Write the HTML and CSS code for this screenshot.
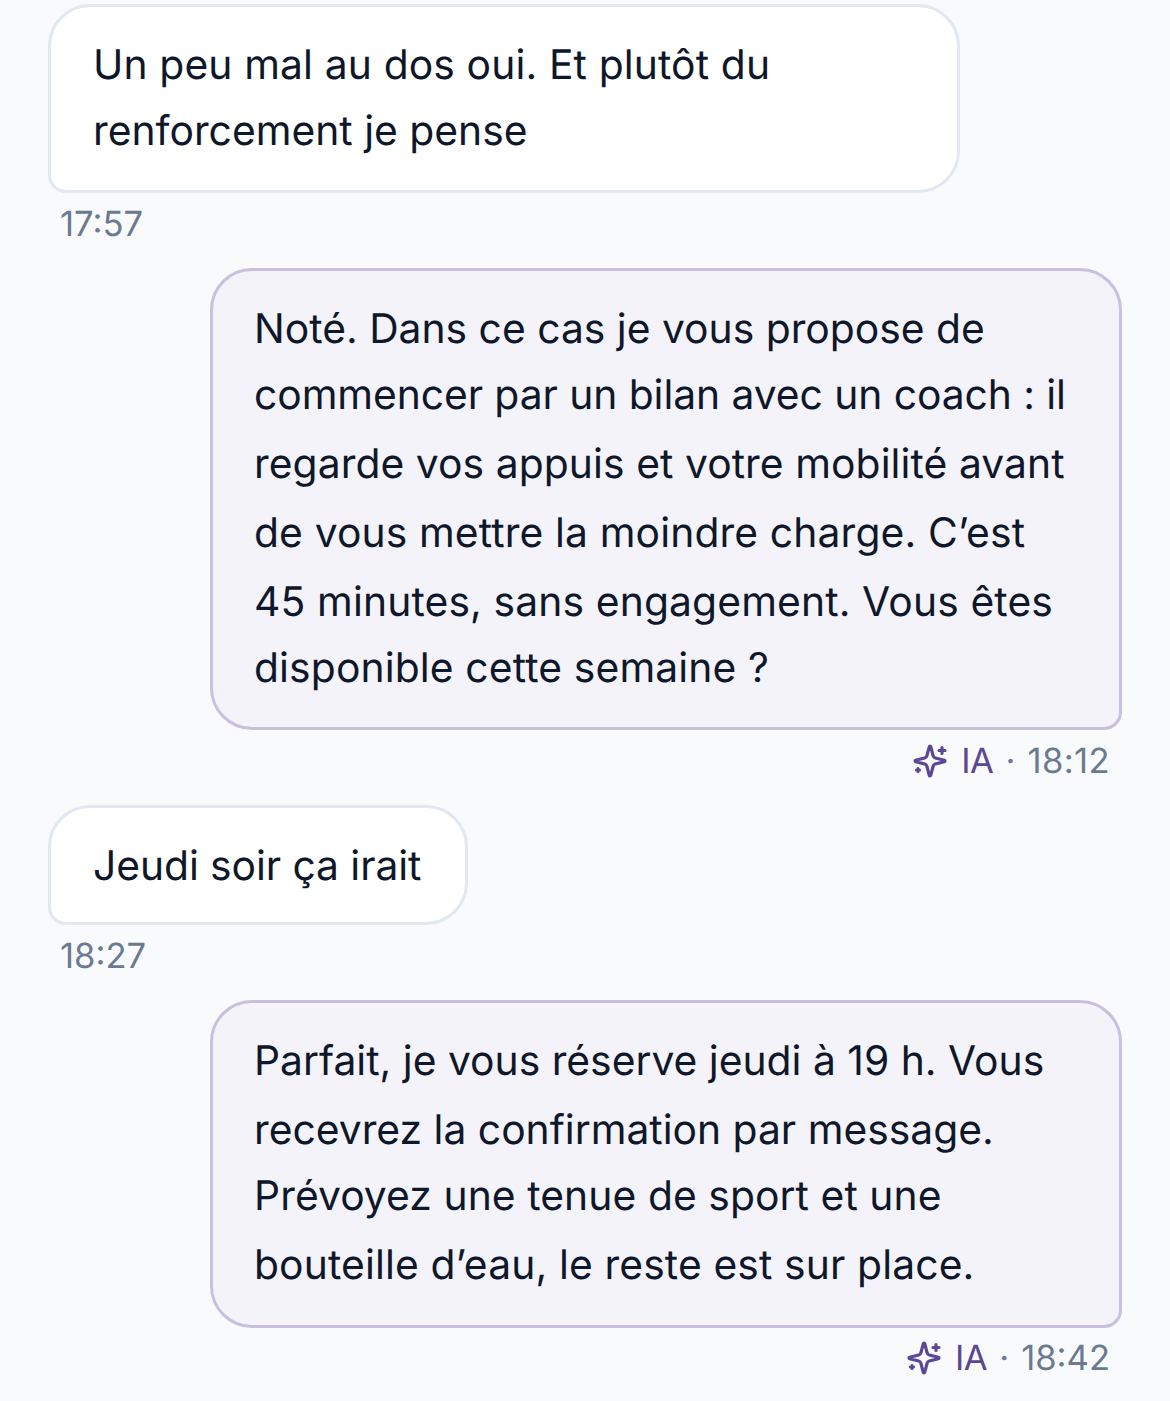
FILE: index.html
```html
<!DOCTYPE html>
<html lang="fr">
<head>
<meta charset="utf-8">
<title>Conversation</title>
<link rel="stylesheet" href="styles.css">
</head>
<body>
<main class="thread">
  <section class="msg msg-in msg-a">
    <div class="bubble">
      <span class="line line-wide">Un peu mal au dos oui. Et plutôt du</span>
      <span class="line">renforcement je pense</span>
    </div>
    <div class="meta"><span class="time">17:57</span></div>
  </section>
  <section class="msg msg-out msg-b">
    <div class="bubble">
      <span class="line">Noté. Dans ce cas je vous propose de</span>
      <span class="line line-tight">commencer par un bilan avec un coach : il</span>
      <span class="line line-gap line-mid">regarde vos appuis et votre mobilité avant</span>
      <span class="line line-gap line-wide">de vous mettre la moindre charge. C’est</span>
      <span class="line line-gap line-wide">45 minutes, sans engagement. Vous êtes</span>
      <span class="line line-wide">disponible cette semaine ?</span>
    </div>
    <div class="meta">
      <svg class="spark" viewBox="0 0 24 24" aria-hidden="true"><path d="M9.937 15.5A2 2 0 0 0 8.5 14.063l-6.135-1.582a.5.5 0 0 1 0-.962L8.5 9.936A2 2 0 0 0 9.937 8.5l1.582-6.135a.5.5 0 0 1 .963 0L14.063 8.5A2 2 0 0 0 15.5 9.937l6.135 1.581a.5.5 0 0 1 0 .964L15.5 14.063a2 2 0 0 0-1.437 1.437l-1.582 6.135a.5.5 0 0 1-.963 0z"/><path d="M20 3v4M22 5h-4M4 17v2M5 18H3"/></svg>
      <span class="ia">IA</span><span class="dot">·</span><span class="time time-wide">18:12</span>
    </div>
  </section>
  <section class="msg msg-in msg-c">
    <div class="bubble">
      <span class="line line-tight">Jeudi soir ça irait</span>
    </div>
    <div class="meta"><span class="time">18:27</span></div>
  </section>
  <section class="msg msg-out msg-d">
    <div class="bubble">
      <span class="line">Parfait, je vous réserve jeudi à 19 h. Vous</span>
      <span class="line line-gap">recevrez la confirmation par message.</span>
      <span class="line line-mid">Prévoyez une tenue de sport et une</span>
      <span class="line line-gap line-wide">bouteille d’eau, le reste est sur place.</span>
    </div>
    <div class="meta">
      <svg class="spark" viewBox="0 0 24 24" aria-hidden="true"><path d="M9.937 15.5A2 2 0 0 0 8.5 14.063l-6.135-1.582a.5.5 0 0 1 0-.962L8.5 9.936A2 2 0 0 0 9.937 8.5l1.582-6.135a.5.5 0 0 1 .963 0L14.063 8.5A2 2 0 0 0 15.5 9.937l6.135 1.581a.5.5 0 0 1 0 .964L15.5 14.063a2 2 0 0 0-1.437 1.437l-1.582 6.135a.5.5 0 0 1-.963 0z"/><path d="M20 3v4M22 5h-4M4 17v2M5 18H3"/></svg>
      <span class="ia">IA</span><span class="dot">·</span><span class="time">18:42</span>
    </div>
  </section>
</main>
</body>
</html>
```
FILE: styles.css
```css
* { box-sizing: border-box; }
html, body { margin: 0; padding: 0; }
body {
  background: #f9fafc;
  color: #0f172a;
  font-family: Inter, "Liberation Sans", sans-serif;
  text-rendering: geometricPrecision;
}
.thread {
  display: flex;
  flex-direction: column;
  gap: 20px;
  padding: 4px 48px 0;
  height: 1401px;
  overflow: hidden;
}
.msg { display: flex; flex-direction: column; width: 912px; }
.msg-in { align-self: flex-start; align-items: flex-start; }
.msg-out { align-self: flex-end; align-items: flex-end; }
.bubble {
  font-size: 40.8px;
  line-height: 66px;
  padding: 24px 42px 27px;
  border: 3px solid #e2e8f0;
  background: #fff;
  border-radius: 42px 42px 42px 18px;
}
.msg-out .bubble {
  width: 100%;
  background: #f4f3fa;
  border-color: #c9c0e0;
  border-radius: 42px 42px 18px 42px;
}
.msg-a .bubble { width: 100%; }
.msg-c .bubble { padding-top: 24px; padding-bottom: 24px; width: 420px; }
.msg-d .bubble { padding-bottom: 28px; }
.line { display: block; white-space: nowrap; }
.line-wide { letter-spacing: 0.13px; }
.line-mid { letter-spacing: 0.07px; }
.line-tight { letter-spacing: -0.07px; }
.msg-out .line { margin-left: -1px; }
.msg-out .line-gap { margin-top: 3px; }
.meta {
  display: flex;
  align-items: center;
  font-size: 34.6px;
  line-height: 48px;
  padding: 7px 12px 0;
  color: #6b7a90;
}
.msg-d .meta { padding-top: 6px; }
.spark {
  width: 36px;
  height: 36px;
  margin-right: 13px;
  fill: none;
  stroke: #5b4794;
  stroke-width: 2.1;
  stroke-linecap: round;
  stroke-linejoin: round;
}
.ia { color: #5b4794; letter-spacing: -0.5px; }
.dot { margin: 0 12px; }
.time-wide { letter-spacing: 0.4px; }
```
